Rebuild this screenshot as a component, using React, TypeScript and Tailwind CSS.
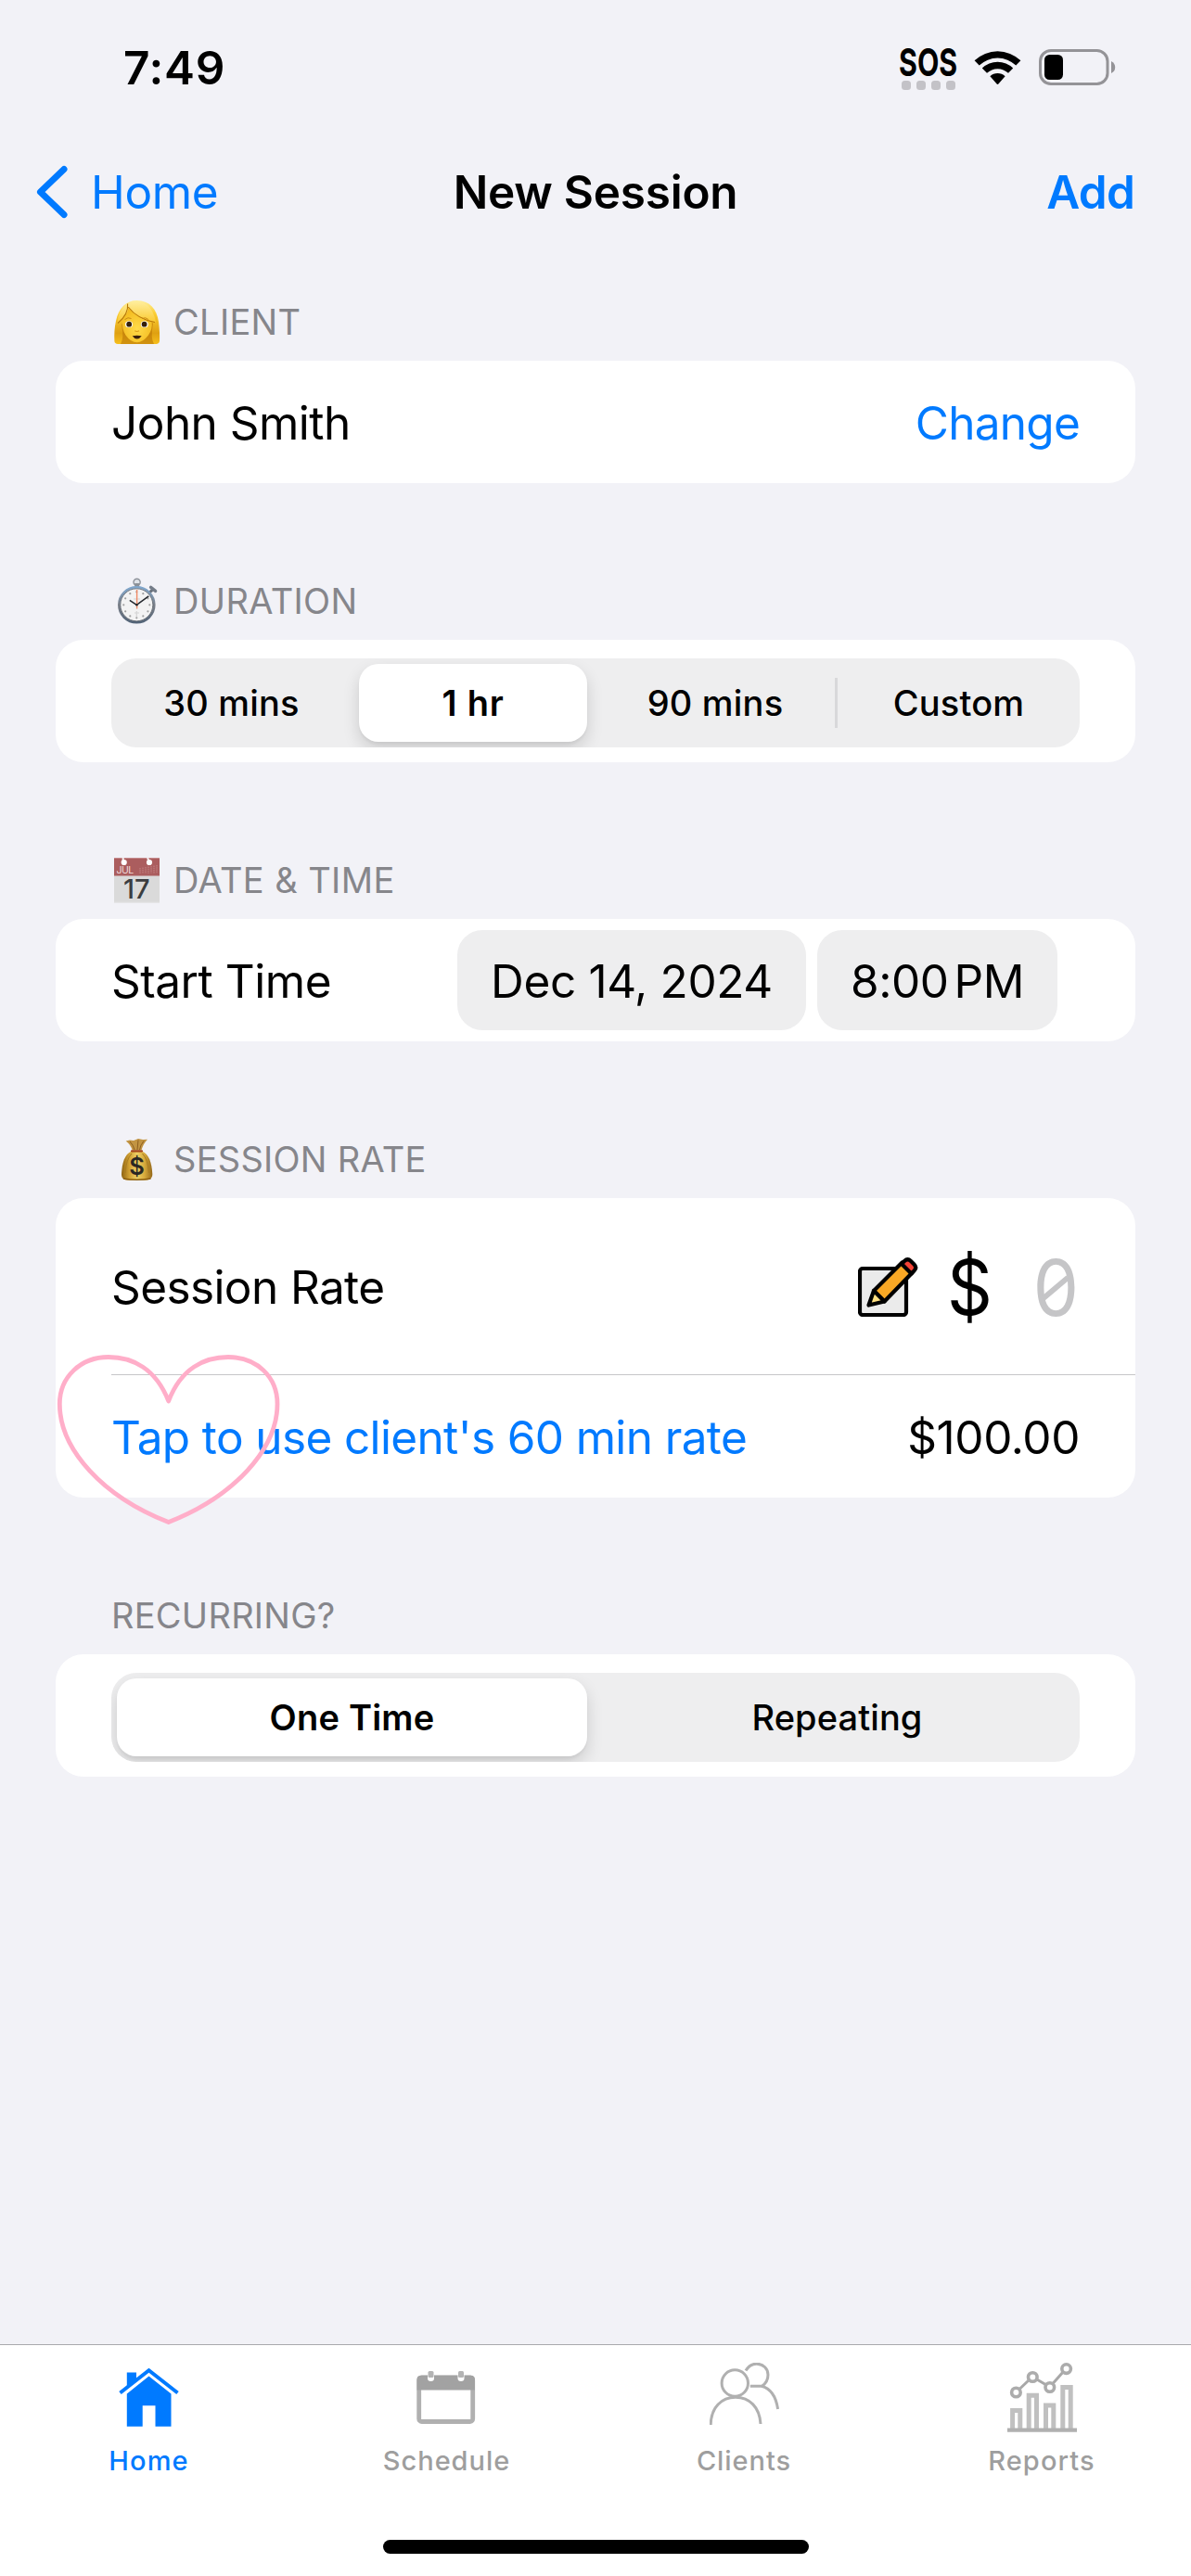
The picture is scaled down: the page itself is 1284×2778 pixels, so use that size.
import type { ReactNode } from "react";

function WifiIcon() {
  return (
    <svg width="51" height="38" viewBox="0 0 51 38">
      <path d="M0.6 11.3A36 36 0 0 1 50.4 11.3L45.3 16.6A28.5 28.5 0 0 0 5.7 16.6Z" />
      <path d="M8.8 19.6A24 24 0 0 1 42.2 19.6L37 24.8A16.5 16.5 0 0 0 14 24.8Z" />
      <path d="M17.4 28.3A11.8 11.8 0 0 1 33.6 28.3L26.6 36.3Q25.5 37.5 24.4 36.3Z" />
    </svg>
  );
}

function BatteryIcon() {
  return (
    <svg width="83" height="40" viewBox="0 0 83 40">
      <rect x="1.5" y="1.5" width="72.5" height="36" rx="11.5" fill="none" stroke="#949397" strokeWidth="3" />
      <rect x="6" y="6" width="20" height="27" rx="5.5" />
      <path d="M78 13Q82.2 15 82.2 19.5T78 26Z" fill="#949397" />
    </svg>
  );
}

function StatusBar() {
  return (
    <div className="flex h-[145px] items-center justify-between pr-[81px] pl-[133px]">
      <span className="text-[49.5px] leading-[60px] font-semibold tracking-[0.7px]">7:49</span>
      <div className="flex items-center">
        <div className="flex w-[62px] flex-col items-center pt-[2px]">
          <span className="scale-x-[0.74] text-[41px] leading-[34px] font-bold">SOS</span>
          <div className="mt-[3px] flex gap-[6px]">
            {[0, 1, 2, 3].map((dot) => (
              <span key={dot} className="size-[10px] rounded-[3.5px] bg-[#c3c2c7]" />
            ))}
          </div>
        </div>
        <div className="ml-[18px]">
          <WifiIcon />
        </div>
        <div className="ml-[19px]">
          <BatteryIcon />
        </div>
      </div>
    </div>
  );
}

function NavBar() {
  return (
    <div className="grid h-[123px] grid-cols-3 items-center text-[49.5px] leading-[60px]">
      <div className="flex items-center pl-[38px] text-[#007aff]">
        <svg width="36" height="60" viewBox="0 0 36 60" fill="none" stroke="currentColor" strokeWidth="7" strokeLinecap="round" strokeLinejoin="round">
          <path d="M31 5.5 L5.500 30 L31 54.5" />
        </svg>
        <span className="ml-[24px] tracking-[-0.35px]">Home</span>
      </div>
      <span className="text-center font-semibold tracking-[-0.24px]">New Session</span>
      <span className="pr-[61px] text-right font-semibold tracking-[-0.8px] text-[#007aff]">Add</span>
    </div>
  );
}

function WomanIcon() {
  return (
    <svg width="55" height="56" viewBox="0 0 55 56">
      <defs>
        <linearGradient id="hair" x1="0" y1="0" x2="0" y2="1">
          <stop offset="0" stopColor="#fff0a0" />
          <stop offset="0.3" stopColor="#fbcd32" />
          <stop offset="0.75" stopColor="#dfa012" />
          <stop offset="1" stopColor="#f6bf1d" />
        </linearGradient>
        <linearGradient id="fringe" x1="0" y1="0" x2="0" y2="1">
          <stop offset="0" stopColor="#ffee9c" />
          <stop offset="1" stopColor="#fac82c" />
        </linearGradient>
        <radialGradient id="face" cx="0.5" cy="0.6" r="0.6">
          <stop offset="0" stopColor="#ffdb4a" />
          <stop offset="1" stopColor="#f3ba1e" />
        </radialGradient>
      </defs>
      <path d="M27.7 5C41 5 49 14 51 28C52 36 52.3 43 52 49Q51.8 51.5 49 52H7Q3.6 51.5 3.4 49C3 42 3.4 34 5 27C8 13 16 5 27.7 5Z" fill="url(#hair)" />
      <path d="M10 52Q14 46 11 31L18 22L41 24L45 30Q42 46 46 52Z" fill="#b97407" opacity="0.6" />
      <path d="M12 27Q17 21 18 13Q30 25 43.7 28Q44.5 36 40 42.5Q34 50.300 27.7 50.300Q21 50.300 15.5 42.5Q11.3 36 12 27Z" fill="url(#face)" />
      <path d="M17.3 8.5Q31 3 40 11Q46 17 48 28.5Q28 25 18.2 12Q18 22 6.5 29.5Q7 16 17.3 8.5Z" fill="url(#fringe)" />
      <path d="M17.6 8.5Q18.8 20 7 29.5M18.2 12Q28 25 47 28.5" fill="none" stroke="#b87808" strokeWidth="1.1" />
      <path d="M14.5 25.6Q18 22.5 21.5 24.5M33 24.5Q37 22.5 40 25.6" fill="none" stroke="#c98a14" strokeWidth="1" />
      <ellipse cx="19" cy="30.7" rx="4" ry="3.500" fill="#fff" />
      <ellipse cx="35.800" cy="30.7" rx="4" ry="3.500" fill="#fff" />
      <circle cx="19.200" cy="30.7" r="2.9" fill="#35200b" />
      <circle cx="35.6" cy="30.7" r="2.9" fill="#35200b" />
      <path d="M25.3 37.8Q27.7 39.2 30 37.8" fill="none" stroke="#dc9c18" strokeWidth="1.2" />
      <path d="M22.7 43.3Q27.7 42 32.7 43.3Q30.8 46.4 27.7 46.4T22.7 43.3Z" fill="#3b210b" />
    </svg>
  );
}

function StopwatchIcon() {
  const ticks = Array.from({ length: 12 }, (_, i) => (i * Math.PI) / 6);
  return (
    <svg width="55" height="56" viewBox="0 0 55 56">
      <defs>
        <linearGradient id="rim" x1="0" y1="0" x2="0" y2="1">
          <stop offset="0" stopColor="#7fa6cc" />
          <stop offset="0.5" stopColor="#7b8089" />
          <stop offset="1" stopColor="#536478" />
        </linearGradient>
      </defs>
      <circle cx="27.6" cy="7.8" r="3.6" fill="#dfe3e8" stroke="#8d9299" strokeWidth="1.4" />
      <rect x="25.2" y="9" width="5" height="4" fill="#8b9097" />
      <path d="M41 19L46 14.8" stroke="#68707b" strokeWidth="3" />
      <path d="M42.6 13.4L47.6 17.4" stroke="#747c88" strokeWidth="3.4" strokeLinecap="round" />
      <circle cx="27.3" cy="32.3" r="19" fill="#f3f3f3" stroke="url(#rim)" strokeWidth="2.6" />
      <circle cx="27.3" cy="32.3" r="17.5" fill="none" stroke="#404852" strokeWidth="0.7" />
      {ticks.map((a) => (
        <circle key={a} cx={27.3 + 14 * Math.sin(a)} cy={32.3 - 14 * Math.cos(a)} r="1.1" fill="#a0a0a0" />
      ))}
      <path d="M24 26h7M25 41h5M27.3 39v6" stroke="#d4d4d4" strokeWidth="1.2" />
      <path d="M19.8 27.3L27.3 32.3L40.3 22.8" fill="none" stroke="#25292e" strokeWidth="1.6" />
      <path d="M27.6 16V36.5" stroke="#f08a66" strokeWidth="1.4" />
      <circle cx="27.4" cy="32.2" r="1.3" fill="#25292e" />
    </svg>
  );
}

function CalendarEmoji() {
  return (
    <svg width="55" height="56" viewBox="0 0 55 56">
      <rect x="3" y="4" width="49" height="48.7" fill="#dadada" />
      <rect x="3" y="4" width="49" height="19.5" fill="#ab5d5e" />
      <path d="M3 4.5H52" stroke="#c58a8c" />
      <path d="M12.7 4V8M39 4L40.7 8" stroke="#f5eeee" strokeWidth="2" />
      <circle cx="13.7" cy="9" r="3.1" fill="#fff" />
      <circle cx="41" cy="9" r="3.1" fill="#fff" />
      <path d="M31 15v6M34 14.5v6.5M37 14v7M40 13.5v7.5M43 13v7.5M46 12.5v8M49 12v8" stroke="#c88a8b" strokeWidth="0.9" strokeDasharray="1.5 0.7" />
      <text x="5.6" y="20.7" fontSize="10.5" fill="#f0dcdc" textLength="18.5" fontFamily="Inter, sans-serif">JUL</text>
      <text x="13" y="48" fontSize="29" fontWeight="500" fill="#3b3d40" textLength="28.5" fontFamily="Inter, sans-serif">17</text>
      <path d="M3 52.2H52" stroke="#e6e6e8" />
    </svg>
  );
}

function MoneyBagIcon() {
  return (
    <svg width="55" height="56" viewBox="0 0 55 56">
      <defs>
        <linearGradient id="bag" x1="0" y1="0" x2="1" y2="0">
          <stop offset="0" stopColor="#8f6413" />
          <stop offset="0.25" stopColor="#d0a032" />
          <stop offset="0.5" stopColor="#efd166" />
          <stop offset="0.75" stopColor="#d6a93b" />
          <stop offset="1" stopColor="#94681a" />
        </linearGradient>
      </defs>
      <path d="M15.7 8.5L20 7.5L24 8L29 6L34 7L39 6.8Q34 12 32.5 18.5H22.6Q21 12.5 15.7 8.5Z" fill="#c29442" />
      <path d="M20 9Q24 13 25 18M29 7.5L28 18M35 8.5Q31 13 30.5 18" fill="none" stroke="#8d5f20" strokeWidth="1" />
      <path d="M22 19.5H33C41 23 43.5 32 44.3 44Q44.5 50.5 37 50.8H18Q10.7 50.5 11 44C11.7 32 14 23 22 19.5Z" fill="url(#bag)" />
      <path d="M15 43Q16 28 22 22M40.5 43Q39.5 28 33.5 22" fill="none" stroke="#a97c22" strokeWidth="1" />
      <path d="M22 19.3H33" stroke="#a5451c" strokeWidth="2.2" strokeLinecap="round" />
      <path d="M13 49Q27 51.5 42.5 49" fill="none" stroke="#8d6013" strokeWidth="1.5" />
      <text x="27.6" y="44.6" fontSize="25.5" fontWeight="600" textAnchor="middle" fill="#2a2723" fontFamily="Inter, sans-serif">$</text>
    </svg>
  );
}

function EditIcon() {
  return (
    <svg width="65" height="65" viewBox="0 0 65 65" stroke="#000" strokeLinejoin="round">
      <rect x="2" y="13" width="50" height="50" rx="3" fill="#ebebeb" strokeWidth="4.2" />
      <path d="M17 37L47.5 6.5L58.5 17.5L28.5 48.5Z" fill="#f9a825" strokeWidth="4.2" />
      <path d="M47 8L50 5Q53.5 1.5 57 5L60.500 8.5Q64 12 60.500 15.500L57.500 18.5Z" fill="#f44336" strokeWidth="4.2" />
      <path d="M17 37L28.5 48.5L11.5 52.5Z" fill="#ffe082" strokeWidth="4.2" />
    </svg>
  );
}

function Section({ title, icon, tracking, children }: { title: string; icon?: ReactNode; tracking: string; children: ReactNode }) {
  return (
    <section className="mb-[85px]">
      <h2 className="flex h-[84px] items-center gap-[12px] pl-[60px] text-[38px] leading-[46px] text-[#86868b]">
        {icon}
        <span className={tracking}>{title}</span>
      </h2>
      <div className="rounded-[30px] bg-white">{children}</div>
    </section>
  );
}

function DurationPicker() {
  return (
    <div className="flex h-[132px] items-start px-[60px] pt-[20px]">
      <div className="flex h-[96px] w-full items-center overflow-hidden rounded-[27px] bg-[#eeeeef] text-[38px] leading-[46px] font-medium">
        <div className="w-[267px] pr-[8px] text-center tracking-[0.2px]">30 mins</div>
        <div className="flex h-[84px] w-[246px] items-center justify-center rounded-[21px] bg-white font-semibold tracking-[0.8px] shadow-[0_8px_18px_rgba(0,0,0,0.14),0_3px_3px_rgba(0,0,0,0.04)]">
          1 hr
        </div>
        <div className="w-[267px] pl-[9px] text-center tracking-[0.2px]">90 mins</div>
        <div className="h-[54px] w-[3px] bg-[#d8d8da]" />
        <div className="flex-1 text-center tracking-[0.2px]">Custom</div>
      </div>
    </div>
  );
}

function RecurringPicker() {
  return (
    <div className="flex h-[132px] items-start px-[60px] pt-[20px]">
      <div className="flex h-[96px] w-full items-center overflow-hidden rounded-[27px] bg-[#eeeeef] pl-[6px] text-[38px] leading-[46px] font-medium">
        <div className="flex h-[84px] w-[507px] items-center justify-center rounded-[21px] bg-white font-semibold tracking-[0.2px] shadow-[0_8px_18px_rgba(0,0,0,0.14),0_3px_3px_rgba(0,0,0,0.04)]">
          One Time
        </div>
        <div className="flex-1 pl-[8px] text-center tracking-[0.1px]">Repeating</div>
      </div>
    </div>
  );
}

function HeartOutline() {
  return (
    <svg className="pointer-events-none absolute top-[169px] left-[1px]" width="242" height="184" viewBox="0 0 242 184" fill="none" stroke="#ffaec9" strokeWidth="4.8" strokeLinejoin="round">
      <path d="M120.7 50C107 15 82 2.5 56 2.5C26 2.5 3.3 24 3.3 53C3.3 102 50 153 120.7 180.5C191 153 238 102 238 53C238 24 216 2.5 185 2.5C159 2.5 134 15 120.7 50Z" />
    </svg>
  );
}

function SessionRate() {
  return (
    <div className="relative text-[49.5px] leading-[60px]">
      <div className="flex h-[190px] items-center justify-between px-[60px]">
        <span className="pt-[1px] tracking-[-0.6px]">Session Rate</span>
        <div className="flex items-center">
          <EditIcon />
          <span className="ml-[29px] w-[53px] scale-x-[0.93] pt-[3px] text-center text-[82px] leading-[100px]">$</span>
          <span className="relative ml-[40px] w-[52px] scale-x-[0.93] pt-[3px] text-center text-[84px] leading-[100px] text-[#c5c5c7]">
            0
            <span className="absolute top-[50px] left-[8px] h-[6px] w-[36px] -rotate-[38deg] bg-[#c5c5c7]" />
          </span>
        </div>
      </div>
      <div className="ml-[60px] h-px bg-[#c6c6c8]" />
      <div className="flex h-[132px] items-center justify-between px-[60px] pt-[1px]">
        <span className="tracking-[-0.63px] whitespace-nowrap text-[#007aff]">Tap to use client's 60 min rate</span>
        <span className="tracking-[-0.4px]">$100.00</span>
      </div>
      <HeartOutline />
    </div>
  );
}

function HomeIcon() {
  return (
    <svg width="75" height="75" viewBox="0 0 75 75" fill="currentColor">
      <path d="M37.5 14.5L61.5 33.5V68.7H44.5V46.3H30.7V68.7H13.8V33.5Z" />
      <path d="M13.8 10.5H24V20L13.8 28Z" />
      <path d="M8.500 34.500L37.5 11.500L66.500 34.500" fill="none" stroke="#fff" strokeWidth="2.6" />
      <path d="M6.5 32.500L37.5 8.200L68.5 32.500" fill="none" stroke="currentColor" strokeWidth="4" />
    </svg>
  );
}

function ScheduleIcon() {
  return (
    <svg width="75" height="75" viewBox="0 0 75 75" fill="#a2a2a2">
      <rect x="7.7" y="16" width="58" height="47.500" rx="3" fill="none" stroke="#b0b0b0" strokeWidth="4.8" />
      <path d="M5.5 29.5V18Q5.5 13.8 10 13.8H63.5Q68 13.8 68 18V29.5Z" />
      <path d="M17 12H24V17Q24 20 20.5 20T17 17ZM49.5 12H56.5V17Q56.5 20 53 20T49.5 17Z" fill="#fff" />
      <rect x="17.500" y="9" width="6" height="7" rx="1.5" fill="#b4b4b4" />
      <rect x="50" y="9" width="6" height="7" rx="1.5" fill="#b4b4b4" />
    </svg>
  );
}

function ClientsIcon() {
  return (
    <svg width="75" height="75" viewBox="0 0 75 75" fill="none" stroke="#b0b0b0" strokeWidth="3">
      <circle cx="27.3" cy="22" r="14.2" />
      <path d="M1.2 67C1.500 48 13 37.2 28 37.2S54 48 55 66" />
      <path d="M39 8.5C42 3.5 46 1 51 1.2C58 1.5 63 6.5 63 13C63 18 60.5 22.5 56.5 25.2H43.8" />
      <path d="M56 25.2C65 27.5 71.5 36 73.6 50" />
    </svg>
  );
}

function ReportsIcon() {
  return (
    <svg width="75" height="75" viewBox="0 0 75 75" fill="none">
      <path d="M5.6 73V51.500H13.8V73M23.200 73V35.3H31.5V73M41.5 73V46H49.800V73M59.8 73V26.500H68.2V73" stroke="#c0c0c0" strokeWidth="5" />
      <path d="M0 72.6H75" stroke="#b0b0b0" strokeWidth="4.400" />
      <path d="M13 28.5L23.5 18.5M31 17.5L42 24M49 22.5L60.5 9.5" stroke="#a8a8a8" strokeWidth="3" />
      <g stroke="#acacac" strokeWidth="3.6">
        <circle cx="9.4" cy="32" r="4.8" />
        <circle cx="27.3" cy="15.500" r="4.8" />
        <circle cx="45.8" cy="26.500" r="4.8" />
        <circle cx="63.6" cy="6.600" r="4.8" />
      </g>
    </svg>
  );
}

function Tab({ icon, label, className }: { icon: ReactNode; label: string; className: string }) {
  return (
    <div className={`flex flex-col items-center pt-[19px] ${className}`}>
      {icon}
      <span className="mt-[13px] text-[29px] leading-[36px] font-medium">{label}</span>
    </div>
  );
}

function TabBar() {
  return (
    <footer className="flex h-[250px] flex-col justify-between border-t border-[#a9a9ad] bg-white pb-[24px]">
      <div className="grid grid-cols-4">
        <Tab icon={<HomeIcon />} label="Home" className="tracking-[1.2px] text-[#007aff]" />
        <Tab icon={<ScheduleIcon />} label="Schedule" className="tracking-[0.95px] text-[#9e9e9e]" />
        <Tab icon={<ClientsIcon />} label="Clients" className="pr-[1px] tracking-[0.95px] text-[#9e9e9e]" />
        <Tab icon={<ReportsIcon />} label="Reports" className="pr-[1px] tracking-[1.1px] text-[#9e9e9e]" />
      </div>
      <div className="h-[15px] w-[459px] self-center rounded-full bg-black" />
    </footer>
  );
}

export default function App() {
  return (
    <div className="flex h-[2778px] w-[1284px] flex-col overflow-hidden bg-[#f2f2f7] font-['Inter',sans-serif] text-black">
      <StatusBar />
      <NavBar />
      <main className="flex-1 pt-[37px] pr-[60px] pl-[60px]">
        <Section title="CLIENT" icon={<WomanIcon />} tracking="tracking-[0.32px]">
          <div className="flex h-[132px] items-center justify-between px-[60px] pt-[1px] text-[49.5px] leading-[60px]">
            <span className="tracking-[-0.53px]">John Smith</span>
            <span className="tracking-[-0.75px] text-[#007aff]">Change</span>
          </div>
        </Section>
        <Section title="DURATION" icon={<StopwatchIcon />} tracking="tracking-[0.37px]">
          <DurationPicker />
        </Section>
        <Section title="DATE & TIME" icon={<CalendarEmoji />} tracking="tracking-[0.4px]">
          <div className="flex h-[132px] items-center pr-[84px] pl-[60px] text-[49.5px] leading-[60px]">
            <span className="flex-1 pt-[1px] tracking-[-0.46px]">Start Time</span>
            <span className="flex h-[108px] w-[376px] items-center justify-center rounded-[27px] bg-[#eeeeef] pt-[1px] tracking-[-0.36px]">
              Dec 14, 2024
            </span>
            <span className="ml-[12px] flex h-[108px] w-[259px] items-center justify-center rounded-[27px] bg-[#eeeeef] pt-[1px] tracking-[-0.45px]">
              8:00<span className="ml-[6px]">PM</span>
            </span>
          </div>
        </Section>
        <Section title="SESSION RATE" icon={<MoneyBagIcon />} tracking="tracking-[0.27px]">
          <SessionRate />
        </Section>
        <Section title="RECURRING?" tracking="tracking-[0.27px]">
          <RecurringPicker />
        </Section>
      </main>
      <TabBar />
    </div>
  );
}
